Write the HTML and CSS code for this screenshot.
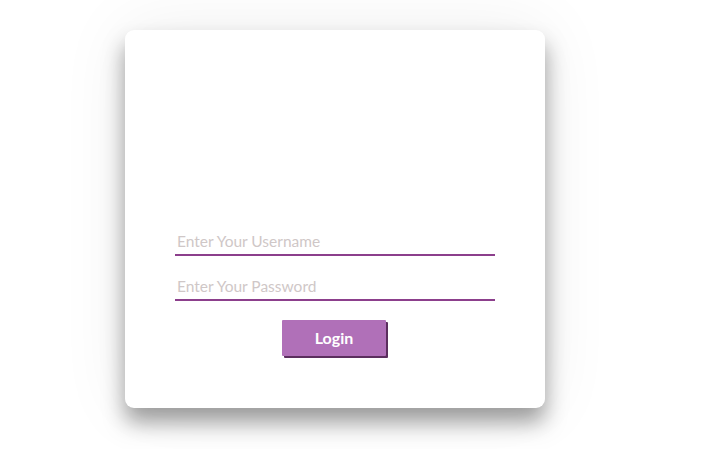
FILE: index.html
```html
<!DOCTYPE html>
<html>
<head>
<meta charset="utf-8">
<link rel="stylesheet" href="styles.css">
</head>
<body>
<div class="page">
  <form class="card">
    <input class="field" type="text" placeholder="Enter Your Username">
    <input class="field" type="password" placeholder="Enter Your Password">
    <button class="btn" type="button">Login</button>
  </form>
</div>
</body>
</html>
```
FILE: styles.css
```css
html, body {
  margin: 0;
  padding: 0;
  background: #ffffff;
  font-family: "Lato", "Open Sans", sans-serif;
}
.page {
  box-sizing: border-box;
  min-height: 100vh;
  padding: 30px 0 0 125px;
}
.card {
  box-sizing: border-box;
  width: 420px;
  height: 378px;
  background: #fff;
  border-radius: 9px;
  box-shadow: 0 14px 22px rgba(0, 0, 0, 0.38), 0 0 70px rgba(0, 0, 0, 0.07);
  display: flex;
  flex-direction: column;
  align-items: center;
  justify-content: flex-end;
  gap: 15px;
  padding-bottom: 52px;
  margin: 0;
}
.field {
  box-sizing: border-box;
  width: 320px;
  height: 30px;
  border: none;
  border-bottom: 2px solid #8c3f8c;
  outline: none;
  padding: 2px 2px 0;
  font-family: "Lato", "Open Sans", sans-serif;
  font-size: 15.5px;
  color: #444;
  background: transparent;
}
.field::placeholder {
  color: #cfc7c7;
}
.btn {
  margin-top: 4px;
  width: 104px;
  height: 36px;
  box-sizing: border-box;
  border: none;
  border-radius: 1px;
  background: #b070b8;
  box-shadow: 2px 2px 0 #5b2e5e;
  color: #fff;
  font-family: "Lato", "Open Sans", sans-serif;
  font-weight: 700;
  font-size: 16px;
  margin-left: -2px;
  padding: 0 0 2px;
}
```
